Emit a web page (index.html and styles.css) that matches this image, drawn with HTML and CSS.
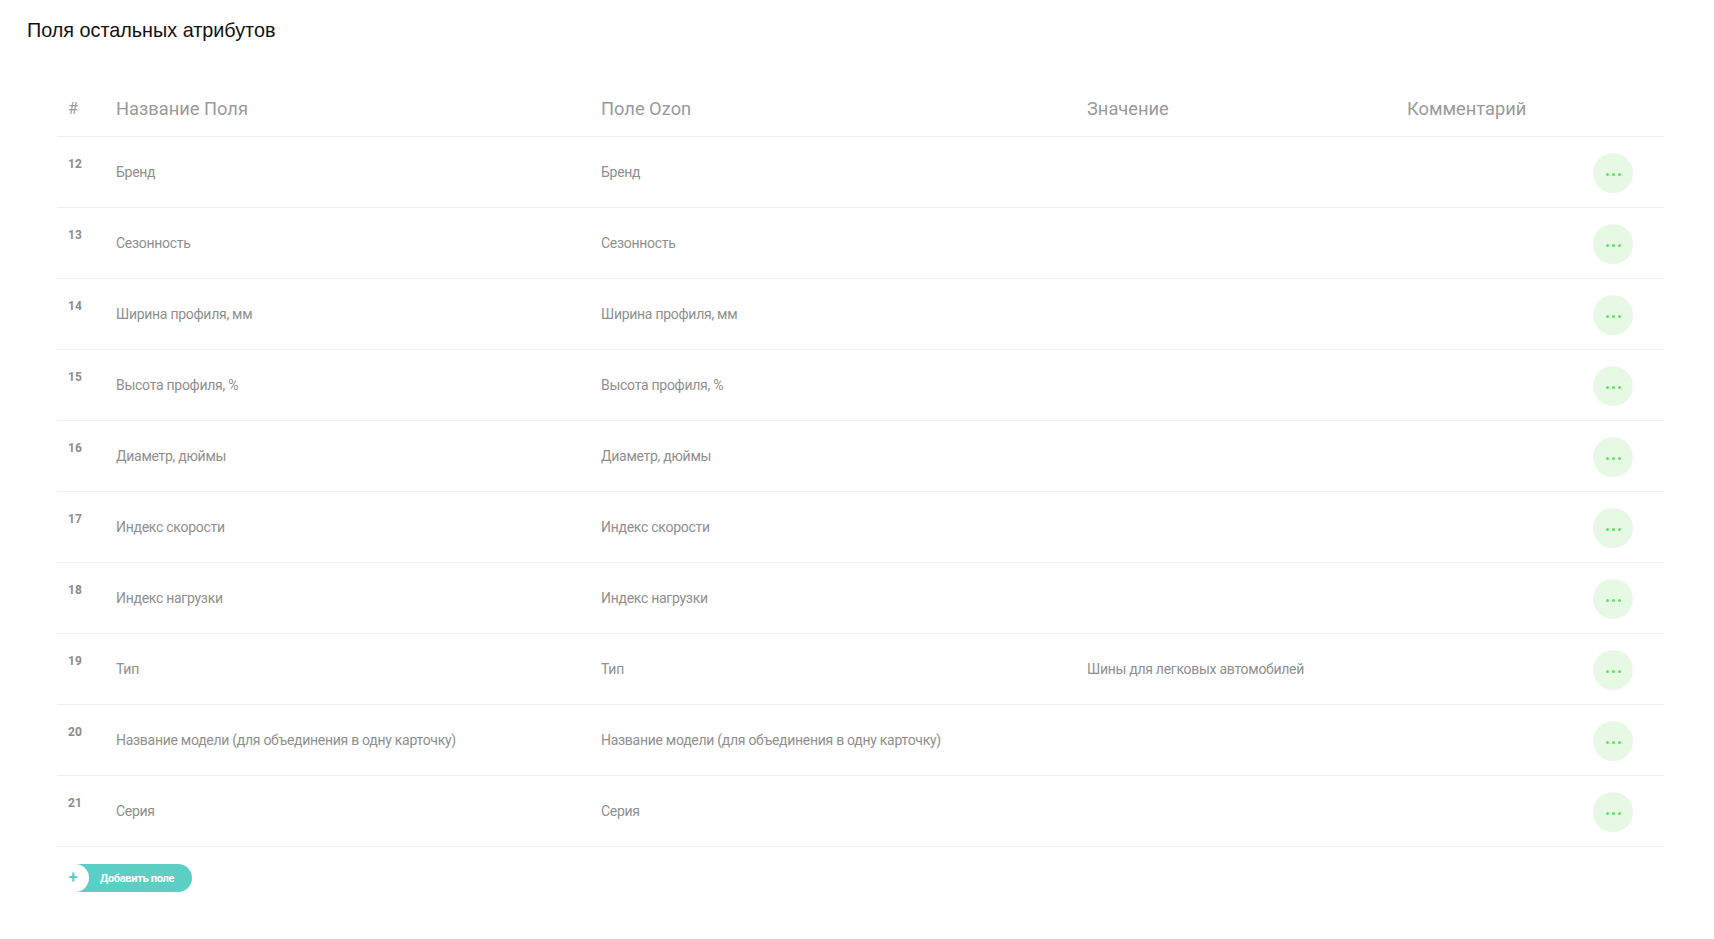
FILE: index.html
```html
<!DOCTYPE html>
<html lang="ru">
<head>
<meta charset="utf-8">
<title>Поля остальных атрибутов</title>
<link rel="stylesheet" href="styles.css">
</head>
<body>
<div class="page">
  <h1 class="title">Поля остальных атрибутов</h1>
  <div class="table">
    <div class="row head">
      <div class="c-num">#</div>
      <div class="c-text">Название Поля</div>
      <div class="c-text">Поле Ozon</div>
      <div class="c-text">Значение</div>
      <div class="c-text">Комментарий</div>
      <div></div>
    </div>
    <div class="row"><div class="c-num">12</div><div class="c-text">Бренд</div><div class="c-text">Бренд</div><div class="c-text"></div><div class="c-text"></div><div class="c-act"><button class="dots"><i></i><i></i><i></i></button></div></div>
    <div class="row"><div class="c-num">13</div><div class="c-text">Сезонность</div><div class="c-text">Сезонность</div><div class="c-text"></div><div class="c-text"></div><div class="c-act"><button class="dots"><i></i><i></i><i></i></button></div></div>
    <div class="row"><div class="c-num">14</div><div class="c-text">Ширина профиля, мм</div><div class="c-text">Ширина профиля, мм</div><div class="c-text"></div><div class="c-text"></div><div class="c-act"><button class="dots"><i></i><i></i><i></i></button></div></div>
    <div class="row"><div class="c-num">15</div><div class="c-text">Высота профиля, %</div><div class="c-text">Высота профиля, %</div><div class="c-text"></div><div class="c-text"></div><div class="c-act"><button class="dots"><i></i><i></i><i></i></button></div></div>
    <div class="row"><div class="c-num">16</div><div class="c-text">Диаметр, дюймы</div><div class="c-text">Диаметр, дюймы</div><div class="c-text"></div><div class="c-text"></div><div class="c-act"><button class="dots"><i></i><i></i><i></i></button></div></div>
    <div class="row"><div class="c-num">17</div><div class="c-text">Индекс скорости</div><div class="c-text">Индекс скорости</div><div class="c-text"></div><div class="c-text"></div><div class="c-act"><button class="dots"><i></i><i></i><i></i></button></div></div>
    <div class="row"><div class="c-num">18</div><div class="c-text">Индекс нагрузки</div><div class="c-text">Индекс нагрузки</div><div class="c-text"></div><div class="c-text"></div><div class="c-act"><button class="dots"><i></i><i></i><i></i></button></div></div>
    <div class="row"><div class="c-num">19</div><div class="c-text">Тип</div><div class="c-text">Тип</div><div class="c-text">Шины для легковых автомобилей</div><div class="c-text"></div><div class="c-act"><button class="dots"><i></i><i></i><i></i></button></div></div>
    <div class="row"><div class="c-num">20</div><div class="c-text">Название модели (для объединения в одну карточку)</div><div class="c-text">Название модели (для объединения в одну карточку)</div><div class="c-text"></div><div class="c-text"></div><div class="c-act"><button class="dots"><i></i><i></i><i></i></button></div></div>
    <div class="row"><div class="c-num">21</div><div class="c-text">Серия</div><div class="c-text">Серия</div><div class="c-text"></div><div class="c-text"></div><div class="c-act"><button class="dots"><i></i><i></i><i></i></button></div></div>
  </div>
  <div class="add-wrap">
    <button class="add-btn"><span class="add-icon">+</span><span class="add-label">Добавить поле</span></button>
  </div>
</div>
</body>
</html>
```

FILE: styles.css
```css
* { box-sizing: border-box; }
html, body { margin: 0; padding: 0; background: #fff; }
body { font-family: Roboto, "Noto Sans", sans-serif; }

.page { padding-top: 16px; }

.title {
  margin: 0 0 0 27px;
  font-family: "Liberation Sans", Arial, sans-serif;
  font-weight: 400;
  font-size: 19.8px;
  line-height: 28px;
  color: #111;
}

.table {
  margin: 35px 50px 0 57px;
}

.row {
  display: grid;
  grid-template-columns: 59px 485px 486px 320px 1fr 40px;
  padding-right: 31px;
  height: 71px;
  border-bottom: 1px solid #f0f0f0;
  align-items: center;
}

.row.head {
  height: 58px;
  align-items: center;
}

.head .c-text {
  font-size: 18.3px;
  letter-spacing: 0;
  color: #9a9a9a;
  padding-top: 2px;
}
.head .c-num {
  font-size: 16px;
  font-weight: 400;
  color: #9a9a9a;
  align-self: center;
  padding-top: 2px;
}

.c-num {
  padding-left: 11px;
  align-self: start;
  padding-top: 20px;
  font-size: 12px;
  line-height: 14px;
  font-weight: 700;
  color: #8c8c8c;
}

.c-text {
  font-size: 14px;
  line-height: 18px;
  color: #8f8f8f;
  letter-spacing: -0.28px;
}

.c-act { display: flex; justify-content: center; }

.dots {
  width: 40px;
  height: 40px;
  margin-top: 1px;
  border-radius: 50%;
  border: 0;
  padding: 3px 0 0;
  background: #e7f9e5;
  display: flex;
  align-items: center;
  justify-content: center;
  gap: 3px;
  cursor: pointer;
}
.dots i {
  width: 3px;
  height: 3px;
  border-radius: 50%;
  background: #5fe06c;
}

.add-wrap {
  padding: 17px 0 0 64px;
}

.add-btn {
  display: inline-flex;
  align-items: center;
  height: 28px;
  padding: 0 18px 0 0;
  border: 0;
  border-radius: 14px;
  background: #5ccfc4;
  cursor: pointer;
  font-family: Roboto, sans-serif;
}
.add-icon {
  width: 28px;
  height: 28px;
  margin-left: -3px;
  border-radius: 50%;
  background: #fff;
  color: #5ccfc4;
  font-weight: 700;
  font-size: 16px;
  line-height: 27px;
  text-align: center;
  padding-right: 4px;
}
.add-label {
  margin-left: 11px;
  color: #fff;
  font-size: 11px;
  font-weight: 700;
  letter-spacing: -0.3px;
}
```
